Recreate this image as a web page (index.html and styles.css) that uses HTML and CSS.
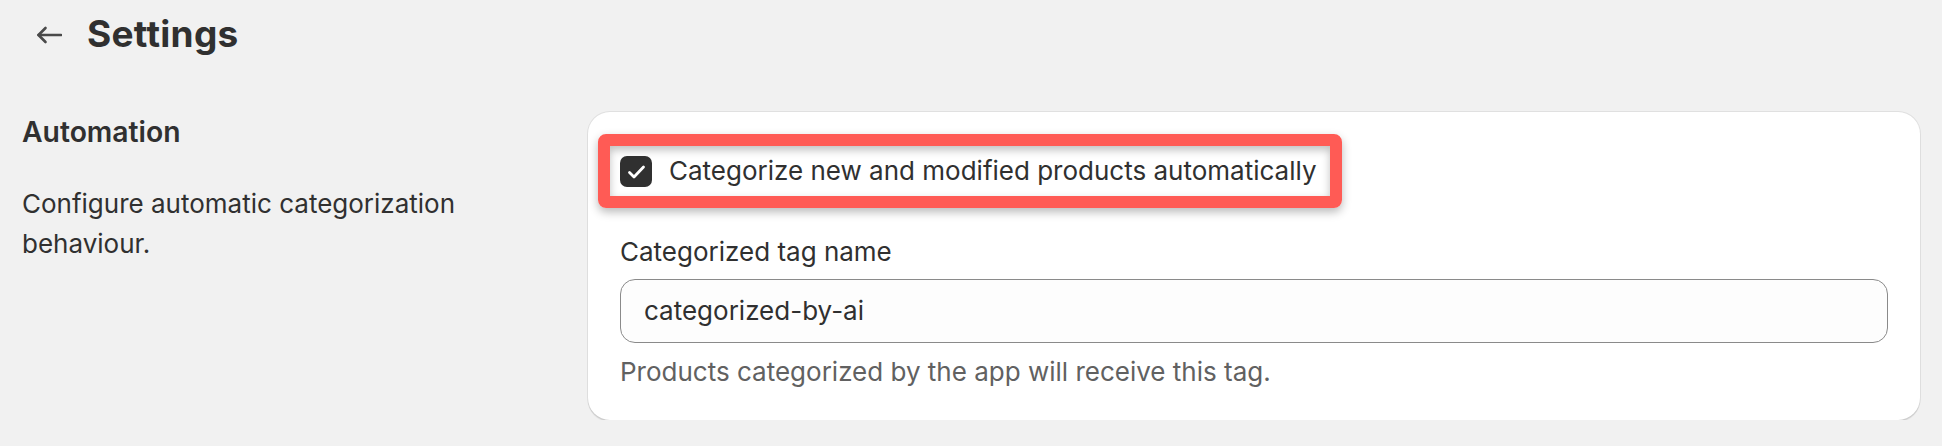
FILE: index.html
```html
<!DOCTYPE html>
<html lang="en">
<head>
<meta charset="utf-8">
<title>Settings</title>
<link rel="stylesheet" href="styles.css">
</head>
<body>
<header class="page-header">
  <button class="back" type="button" aria-label="Back">
    <svg width="26" height="18" viewBox="0 0 26 18" fill="none" stroke="#4a4a4a" stroke-width="2.6" stroke-linecap="round" stroke-linejoin="round">
      <path d="M25 9H2.5"/>
      <path d="M9.5 2L2.5 9l7 7"/>
    </svg>
  </button>
  <h1 class="title">Settings</h1>
</header>

<main class="layout">
  <section class="annotation">
    <h2 class="annotation-title">Automation</h2>
    <p class="annotation-desc">Configure automatic categorization behaviour.</p>
  </section>

  <section class="card">
    <div class="check-row">
      <label class="check">
        <span class="check-box">
          <svg width="32" height="31" viewBox="0 0 32 31" fill="none" stroke="#fff" stroke-width="2.8" stroke-linecap="round" stroke-linejoin="round">
            <path d="M9.5 16.5l4.5 4.5 9.5-10"/>
          </svg>
        </span>
        <span class="check-label">Categorize new and modified products automatically</span>
      </label>
      <span class="highlight" aria-hidden="true"></span>
    </div>

    <div class="field">
      <label class="field-label" for="tag">Categorized tag name</label>
      <div class="input" id="tag">categorized-by-ai</div>
      <p class="help">Products categorized by the app will receive this tag.</p>
    </div>
  </section>
</main>
</body>
</html>
```

FILE: styles.css
```css
* { box-sizing: border-box; }

body {
  margin: 0;
  background: #f1f1f1;
  color: #303030;
  font-family: Inter, "Noto Sans", "Liberation Sans", sans-serif;
  font-size: 26px;
  line-height: 40px;
}

.page-header {
  display: flex;
  align-items: flex-start;
  padding: 10px 22px 0;
  height: 112px;
}

.back {
  display: flex;
  align-items: center;
  margin: 16px 0 0 14px;
  padding: 0;
  border: 0;
  background: none;
  width: 26px;
  height: 18px;
}

.title {
  margin: 0 0 0 25px;
  font-size: 37px;
  line-height: 48px;
  font-weight: 700;
  letter-spacing: 0.3px;
  color: #303030;
}

.layout {
  display: grid;
  grid-template-columns: 566px 1fr;
  padding: 0 22px;
  align-items: start;
}

.annotation {
  padding-right: 60px;
}

.annotation-title {
  margin: 0;
  font-size: 28.3px;
  line-height: 40px;
  font-weight: 600;
}

.annotation-desc {
  margin: 32px 0 0;
}

.card {
  background: #fff;
  border-radius: 22px;
  padding: 39px 32px 28px;
  box-shadow: 0 0 0 1px rgba(0, 0, 0, 0.07), 0 2px 1px rgba(0, 0, 0, 0.09);
}

.check-row {
  position: relative;
  display: flex;
  width: max-content;
}

.check {
  display: flex;
  align-items: center;
  gap: 17px;
  height: 40px;
}

.check-box {
  width: 32px;
  height: 31px;
  border-radius: 7px;
  background: #303030;
  display: flex;
}

.highlight {
  position: absolute;
  top: -17px;
  bottom: -17px;
  left: -22px;
  right: -25px;
  border: 12px solid #ff5b55;
  border-radius: 8px;
  box-shadow: 0 4px 10px rgba(0, 0, 0, 0.28), inset 0 4px 9px rgba(0, 0, 0, 0.25);
  pointer-events: none;
}

.field {
  margin-top: 41px;
  display: flex;
  flex-direction: column;
}

.input {
  margin-top: 7px;
  height: 64px;
  border: 1px solid #8a8a8a;
  border-radius: 15px;
  background: #fdfdfd;
  padding: 0 23px;
  display: flex;
  align-items: center;
}

.help {
  margin: 9px 0 0;
  color: #616161;
}
```
